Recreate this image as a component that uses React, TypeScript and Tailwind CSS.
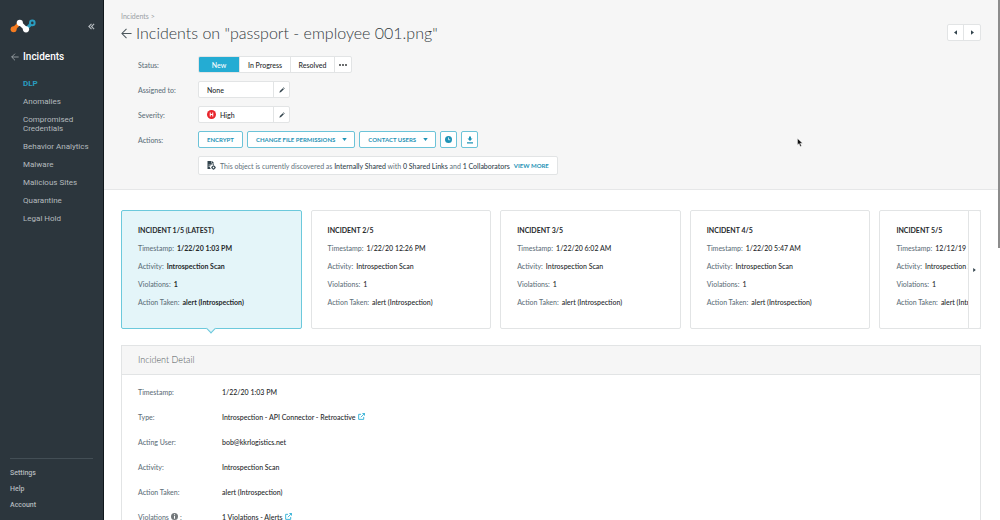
import React from "react";

const navItems = [
  "DLP",
  "Anomalies",
  "Compromised Credentials",
  "Behavior Analytics",
  "Malware",
  "Malicious Sites",
  "Quarantine",
  "Legal Hold",
];

const incidents = [
  { title: "INCIDENT 1/5 (LATEST)", time: "1/22/20 1:03 PM" },
  { title: "INCIDENT 2/5", time: "1/22/20 12:26 PM" },
  { title: "INCIDENT 3/5", time: "1/22/20 6:02 AM" },
  { title: "INCIDENT 4/5", time: "1/22/20 5:47 AM" },
  { title: "INCIDENT 5/5", time: "12/12/19 12:48 PM" },
];

function ArrowLeft({ className }: { className: string }) {
  return (
    <svg viewBox="0 0 12 12" className={className} fill="none" stroke="currentColor" strokeWidth="1.1">
      <path d="M11.5 6H1M6 1 1 6l5 5" />
    </svg>
  );
}

function Logo() {
  return (
    <svg viewBox="0 0 26 16" className="h-4 w-[26px]" fill="none">
      <path d="M3.600 11.200 9.800 4.800" stroke="#f47b20" strokeWidth="3.600" />
      <circle cx="3.600" cy="11.300" r="3" fill="#f47b20" />
      <path d="m16 11.300 6-6.500" stroke="#2a9dc0" strokeWidth="3.200" />
      <circle cx="22.300" cy="4.900" r="2.300" fill="#2c363d" stroke="#2a9dc0" strokeWidth="2" />
      <path d="m9.800 5 6.200 6.200" stroke="#fff" strokeWidth="4" />
      <circle cx="9.800" cy="4.800" r="3.100" fill="#fff" />
      <circle cx="16" cy="11.300" r="3.100" fill="#fff" />
    </svg>
  );
}

function Pencil() {
  return (
    <svg viewBox="0 0 8 8" className="h-[6px] w-[6px] text-[#33444d]" fill="currentColor">
      <path d="m.5 7.500.7-2.200L5 1.500 6.500 3 2.700 6.800zM5.500 1l.6-.6L7.600 1.900l-.6.6z" />
    </svg>
  );
}

function Caret() {
  return (
    <svg viewBox="0 0 6 4" className="h-[3px] w-[5px]" fill="currentColor">
      <path d="M0 0h6L3 4z" />
    </svg>
  );
}

function ExternalLink() {
  return (
    <svg viewBox="0 0 16 16" className="h-[7px] w-[7px]" fill="none" stroke="currentColor" strokeWidth="2">
      <path d="M7 3H1.500v11.500H13V9M10 1.200h5V6M15 1.200 6.500 9.700" />
    </svg>
  );
}

function FileIcon() {
  return (
    <svg viewBox="0 0 18 18" className="h-[9px] w-[9px] text-[#33444d]" fill="currentColor">
      <path d="M1 0h8v5h5v3a5 5 0 0 0-6 8H1zM10 0l4 4h-4z" />
      <path d="M3 8h5M3 11h3" stroke="#fff" strokeWidth="1.200" />
      <circle cx="13" cy="13" r="3" fill="none" stroke="currentColor" strokeWidth="2.200" />
      <path d="M13 8.500v9M8.500 13h9" stroke="currentColor" strokeWidth="1.200" />
      <circle cx="13" cy="13" r="1.300" fill="#fff" />
    </svg>
  );
}

function Field({ label, id, children }: { label: string; id?: string; children: React.ReactNode }) {
  return (
    <div className="flex items-center">
      {id ? (
        <label htmlFor={id} className="w-[60px] shrink-0 font-medium text-[#5f717b]">{label}</label>
      ) : (
        <span className="w-[60px] shrink-0 font-medium text-[#5f717b]">{label}</span>
      )}
      {children}
    </div>
  );
}

function EditBox({ id, value, icon }: { id: string; value: string; icon?: React.ReactNode }) {
  return (
    <div className="flex h-[17px] w-[92px] rounded-[2px] border border-[#e2e4e5] bg-white">
      <div className="flex min-w-0 flex-1 items-center gap-1 pl-2">
        {icon}
        <input id={id} readOnly value={value} className="w-full min-w-0 bg-transparent font-medium text-[#26292b] outline-none" />
      </div>
      <button aria-label={`Edit ${id}`} className="flex w-4 items-center justify-center border-l border-[#e2e4e5]">
        <Pencil />
      </button>
    </div>
  );
}

const actionClass =
  "flex h-[17px] items-center justify-center rounded-[2px] border border-[#6cc3d8] bg-white text-[6px] font-bold text-[#1f93b6]";

function Pair({ name, value, bold }: { name: string; value: string; bold?: boolean }) {
  return (
    <p className="flex gap-[3px] whitespace-nowrap text-[#5f717b]">
      <span className="font-medium">{name}:</span>
      <span className={bold ? "font-bold text-[#26292b]" : "font-medium text-[#26292b]"}>{value}</span>
    </p>
  );
}

function DetailRow({ name, children }: { name: React.ReactNode; children: React.ReactNode }) {
  return (
    <tr className="h-[25px]">
      <th scope="row" className="w-[84px] text-left font-medium text-[#5f717b]">{name}</th>
      <td className="font-medium">{children}</td>
    </tr>
  );
}

export default function App() {
  return (
    <div className="flex h-screen overflow-hidden bg-white font-['Lato',sans-serif] text-[7px] leading-[10px] text-[#26292b]">
      <aside className="flex w-[104px] shrink-0 flex-col border-r border-[#11181c] bg-[#2c363d] font-['Roboto',sans-serif] text-[#b4babe]">
        <div className="flex items-center justify-between pt-[18px] pr-2 pl-[10px]">
          <Logo />
          <button aria-label="Collapse menu">
            <svg viewBox="0 0 8 8" className="h-[7px] w-[7px]" fill="none" stroke="currentColor" strokeWidth="1.300">
              <path d="M4 1 1 4l3 3M7 1 4 4l3 3" />
            </svg>
          </button>
        </div>
        <a href="#" className="mt-[17px] flex items-center gap-1 pl-[11px] text-[10px] leading-3 font-medium text-white">
          <ArrowLeft className="h-2 w-2 text-[#b4babe]" />
          Incidents
        </a>
        <nav className="mt-4 flex flex-col gap-[9px] pl-[23px] text-[8px] leading-[9px]">
          {navItems.map((item, i) => (
            <a key={item} href="#" className={i === 0 ? "font-bold text-[#2a9dc0]" : "max-w-[70px]"}>
              {item}
            </a>
          ))}
        </nav>
        <div className="mx-[10px] mt-auto mb-[10px] flex flex-col items-start gap-[6px] border-t border-[#434e55] pt-[9px] font-medium">
          <a href="#">Settings</a>
          <a href="#">Help</a>
          <a href="#">Account</a>
        </div>
      </aside>

      <main className="relative min-w-0 flex-1 overflow-hidden">
        <header className="flex justify-between border-b border-[#e6e7e8] bg-[#f6f6f6] pt-[11px] pr-[19px] pb-[14px] pl-[17px]">
          <div>
            <a href="#" className="block text-[#9aa0a4]">Incidents &gt;</a>
            <h1 className="flex items-center gap-1 text-[16px] leading-6 font-light text-[#333a3e]">
              <a href="#" aria-label="Back">
                <ArrowLeft className="h-[11px] w-[11px] text-[#4b565c]" />
              </a>
              Incidents on "passport - employee 001.png"
            </h1>
            <div className="mt-[11px] flex flex-col gap-2 pl-[17px]">
              <Field label="Status:">
                <div className="flex h-[17px] divide-x divide-[#e2e4e5] overflow-hidden rounded-[2px] border border-[#e2e4e5] bg-white font-medium">
                  <button className="w-[41px] bg-[#24acd3] text-white">New</button>
                  <button className="w-[51px]">In Progress</button>
                  <button className="w-[44px]">Resolved</button>
                  <button aria-label="More statuses" className="flex w-4 items-center justify-center gap-px">
                    <svg viewBox="0 0 8 2" className="h-[2px] w-2" fill="currentColor">
                      <circle cx="1" cy="1" r=".9" />
                      <circle cx="4" cy="1" r=".9" />
                      <circle cx="7" cy="1" r=".9" />
                    </svg>
                  </button>
                </div>
              </Field>
              <Field label="Assigned to:" id="assignee">
                <EditBox id="assignee" value="None" />
              </Field>
              <Field label="Severity:" id="severity">
                <EditBox
                  id="severity"
                  value="High"
                  icon={
                    <svg viewBox="0 0 18 18" className="h-[9px] w-[9px] shrink-0">
                      <circle cx="9" cy="9" r="9" fill="#e8262d" />
                      <path d="M6.500 5v8M11.500 5v8M6.500 9h5" stroke="#fff" strokeWidth="2" />
                    </svg>
                  }
                />
              </Field>
              <Field label="Actions:">
                <div className="flex gap-1">
                  <button className={`${actionClass} px-2`}>ENCRYPT</button>
                  <button className={`${actionClass} gap-[7px] pr-[7px] pl-2`}>
                    CHANGE FILE PERMISSIONS <Caret />
                  </button>
                  <button className={`${actionClass} gap-[7px] pr-[7px] pl-2`}>
                    CONTACT USERS <Caret />
                  </button>
                  <button aria-label="History" className={`${actionClass} w-[17px]`}>
                    <svg viewBox="0 0 14 14" className="h-[7px] w-[7px]">
                      <circle cx="7" cy="7" r="7" fill="#1f93b6" />
                      <path d="M7 3v4.500h3.500" fill="none" stroke="#fff" strokeWidth="1.500" />
                    </svg>
                  </button>
                  <button aria-label="Download" className={`${actionClass} w-[17px]`}>
                    <svg viewBox="0 0 16 16" className="h-2 w-2" fill="currentColor">
                      <path d="M6 1h4v4h3l-5 5-5-5h3zM2 12.500h12V15H2z" />
                    </svg>
                  </button>
                </div>
              </Field>
              <div className="ml-[60px] flex h-[19px] w-fit items-center gap-1 rounded-[2px] border border-[#e2e4e5] bg-white px-2 whitespace-nowrap text-[#5f717b]">
                <FileIcon />
                <p>
                  This object is currently discovered as{" "}
                  <b className="font-medium text-[#33444d]">Internally Shared</b> with{" "}
                  <b className="font-medium text-[#33444d]">0 Shared Links</b> and{" "}
                  <b className="font-medium text-[#33444d]">1 Collaborators</b>
                </p>
                <a href="#" className="text-[6px] font-bold text-[#1f93b6]">VIEW MORE</a>
              </div>
            </div>
          </div>
          <div className="mt-[13px] flex h-[17px] divide-x divide-[#e2e4e5] rounded-[2px] border border-[#e2e4e5] bg-white text-[#33444d]">
            <button aria-label="Previous" className="flex w-4 items-center justify-center">
              <svg viewBox="0 0 4 6" className="h-[5px] w-[3px]" fill="currentColor"><path d="M4 0v6L0 3z" /></svg>
            </button>
            <button aria-label="Next" className="flex w-4 items-center justify-center">
              <svg viewBox="0 0 4 6" className="h-[5px] w-[3px]" fill="currentColor"><path d="M0 0v6l4-3z" /></svg>
            </button>
          </div>
        </header>

        <div className="pt-5 pr-[19px] pl-[17px]">
          <section className="relative">
            <div className="grid auto-cols-[21%] grid-flow-col gap-[9px] overflow-hidden pb-[5px]">
              {incidents.map((incident, i) => (
                <article
                  key={incident.title}
                  className={
                    i === 0
                      ? "relative flex flex-col gap-2 rounded-[2px] border border-[#6cc9dc] bg-[#e4f5f9] px-4 pt-[14px] pb-[21px]"
                      : "flex flex-col gap-2 rounded-[2px] border border-[#e2e4e5] bg-white px-4 pt-[14px] pb-[21px]"
                  }
                >
                  <h2 className="font-bold whitespace-nowrap">{incident.title}</h2>
                  <Pair name="Timestamp" value={incident.time} bold={i === 0} />
                  <Pair name="Activity" value="Introspection Scan" bold={i === 0} />
                  <Pair name="Violations" value="1" bold={i === 0} />
                  <Pair name="Action Taken" value="alert (Introspection)" bold={i === 0} />
                  {i === 0 && (
                    <span className="absolute -bottom-1 left-1/2 h-[7px] w-[7px] -translate-x-1/2 rotate-45 border-r border-b border-[#6cc9dc] bg-[#e4f5f9]" />
                  )}
                </article>
              ))}
            </div>
            <button
              aria-label="Next incidents"
              className="absolute top-0 right-0 bottom-[5px] flex w-[13px] items-center justify-center rounded-r-[2px] border border-[#e2e4e5] bg-white text-[#33444d]"
            >
              <svg viewBox="0 0 4 6" className="h-1 w-[3px]" fill="currentColor"><path d="M0 0v6l4-3z" /></svg>
            </button>
          </section>

          <section className="mt-[11px] border border-[#e2e4e5]">
            <h2 className="border-b border-[#e2e4e5] bg-[#f6f6f6] px-4 py-2 text-[9px] leading-3 font-light text-[#50565a]">
              Incident Detail
            </h2>
            <table className="mx-4 mt-1 border-collapse">
              <tbody>
                <DetailRow name="Timestamp:">1/22/20 1:03 PM</DetailRow>
                <DetailRow name="Type:">
                  <span className="flex items-center gap-[2px]">
                    Introspection - API Connector - Retroactive
                    <a href="#" aria-label="Open connector" className="text-[#24acd3]"><ExternalLink /></a>
                  </span>
                </DetailRow>
                <DetailRow name="Acting User:">bob@kkrlogistics.net</DetailRow>
                <DetailRow name="Activity:">Introspection Scan</DetailRow>
                <DetailRow name="Action Taken:">alert (Introspection)</DetailRow>
                <DetailRow
                  name={
                    <span className="flex items-center">
                      Violations
                      <svg viewBox="0 0 14 14" className="mx-[2px] h-[7px] w-[7px]">
                        <circle cx="7" cy="7" r="7" fill="#74797c" />
                        <path d="M7 2.500v2M7 6v5.500" stroke="#fff" strokeWidth="2" />
                      </svg>
                      :
                    </span>
                  }
                >
                  <span className="flex items-center gap-[2px]">
                    1 Violations - Alerts
                    <a href="#" aria-label="Open violations" className="text-[#24acd3]"><ExternalLink /></a>
                  </span>
                </DetailRow>
              </tbody>
            </table>
          </section>
        </div>
        <div className="absolute top-0 right-0 h-[248px] w-[2px] bg-[#8c8c8c]" />
      </main>

      <svg viewBox="0 0 12 18" className="pointer-events-none absolute top-[138px] left-[797px] h-[9px] w-[6px]">
        <path d="M1 1v13l3-3 2.500 6 2.500-1-2.500-5.500H11z" fill="#111" stroke="#fff" strokeWidth=".8" />
      </svg>
    </div>
  );
}
